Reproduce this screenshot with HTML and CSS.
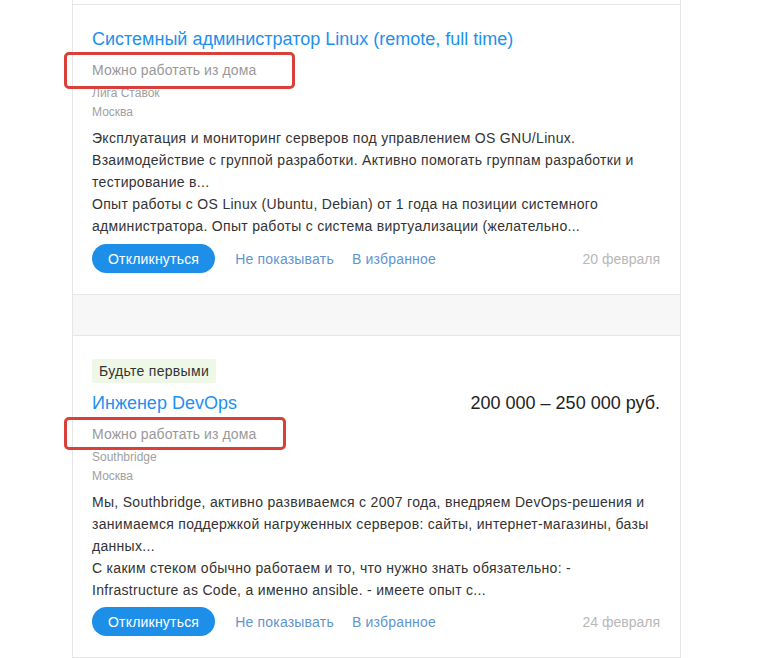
FILE: index.html
```html
<!DOCTYPE html>
<html lang="ru">
<head>
<meta charset="utf-8">
<title>Вакансии</title>
<link rel="stylesheet" href="styles.css">
</head>
<body>
<div class="list">
  <div class="vacancy">
    <div class="head">
      <a class="title" href="#">Системный администратор Linux (remote, full time)</a>
    </div>
    <div class="remote">Можно работать из дома<span class="mark mark-a"></span></div>
    <div class="meta">Лига Ставок</div>
    <div class="meta">Москва</div>
    <div class="desc">
      <p>Эксплуатация и мониторинг серверов под управлением OS GNU/Linux. Взаимодействие с группой разработки. Активно помогать группам разработки и тестирование в...</p>
      <p>Опыт работы с OS Linux (Ubuntu, Debian) от 1 года на позиции системного администратора. Опыт работы с система виртуализации (желательно...</p>
    </div>
    <div class="actions">
      <button class="respond">Откликнуться</button>
      <a class="link" href="#">Не показывать</a>
      <a class="link" href="#">В избранное</a>
      <span class="date">20 февраля</span>
    </div>
  </div>
  <div class="gap"></div>
  <div class="vacancy vacancy-b">
    <div class="badge">Будьте первыми</div>
    <div class="head">
      <a class="title" href="#">Инженер DevOps</a>
      <span class="salary">200 000 – 250 000 руб.</span>
    </div>
    <div class="remote">Можно работать из дома<span class="mark mark-b"></span></div>
    <div class="meta">Southbridge</div>
    <div class="meta">Москва</div>
    <div class="desc">
      <p>Мы, Southbridge, активно развиваемся с 2007 года, внедряем DevOps-решения и занимаемся поддержкой нагруженных серверов: сайты, интернет-магазины, базы данных...</p>
      <p>С каким стеком обычно работаем и то, что нужно знать обязательно: - Infrastructure as Code, а именно ansible. - имеете опыт с...</p>
    </div>
    <div class="actions">
      <button class="respond">Откликнуться</button>
      <a class="link" href="#">Не показывать</a>
      <a class="link" href="#">В избранное</a>
      <span class="date">24 февраля</span>
    </div>
  </div>
</div>
</body>
</html>
```
FILE: styles.css
```css
html, body {
  margin: 0;
  padding: 0;
  background: #ffffff;
  font-family: "Liberation Sans", Arial, sans-serif;
  color: #333333;
}

.list {
  margin-left: 72px;
  width: 609px;
  box-sizing: border-box;
  padding-top: 4px;
  border-left: 1px solid #e6e6e6;
  border-right: 1px solid #e6e6e6;
  border-bottom: 1px solid #e6e6e6;
}

.vacancy {
  border-top: 1px solid #e6e6e6;
  padding: 22px 20px 21px 19px;
}

.vacancy-b {
  padding-top: 23px;
}

.gap {
  height: 40px;
  background: #f7f7f7;
  border-top: 1px solid #e6e6e6;
}

.badge {
  display: inline-block;
  height: 24px;
  line-height: 24px;
  padding: 0 7px;
  font-size: 14px;
  letter-spacing: 0.3px;
  color: #333333;
  background: #eff8e6;
  border-radius: 2px;
  margin-bottom: 8px;
}

.head {
  display: flex;
  justify-content: space-between;
  align-items: baseline;
  line-height: 24px;
}

.title {
  font-size: 18px;
  color: #1e90ee;
  text-decoration: none;
}

.salary {
  font-size: 18px;
  color: #222222;
}

.remote {
  position: relative;
  margin-top: 9px;
  font-size: 14px;
  line-height: 20px;
  color: #999999;
  letter-spacing: 0.1px;
}

.mark {
  position: absolute;
  box-sizing: border-box;
  left: -28px;
  border: 3px solid #d9403a;
  border-radius: 5px;
}

.mark-a {
  top: -8px;
  width: 231px;
  height: 37px;
}

.mark-b {
  top: -7px;
  width: 222px;
  height: 33px;
}

.meta {
  font-size: 12px;
  line-height: 19px;
  color: #a0a0a0;
}

.remote + .meta {
  margin-top: 4px;
}

.desc {
  margin-top: 5px;
  font-size: 14px;
  line-height: 22px;
  letter-spacing: 0.3px;
  color: #333333;
}

.desc p {
  margin: 0;
}

.actions {
  display: flex;
  align-items: center;
  margin-top: 7px;
  height: 29px;
}

.vacancy-b .actions {
  margin-top: 6px;
}

.respond {
  height: 29px;
  padding: 0 16px;
  border: none;
  border-radius: 15px;
  background: #1d8fe9;
  color: #ffffff;
  font-family: "Liberation Sans", Arial, sans-serif;
  font-size: 14px;
  letter-spacing: 0.2px;
  margin-right: 20px;
}

.link {
  font-size: 14px;
  color: #5f95cf;
  text-decoration: none;
  letter-spacing: 0.2px;
  margin-right: 18px;
}

.date {
  margin-left: auto;
  font-size: 14px;
  color: #b8b8b8;
}
```
